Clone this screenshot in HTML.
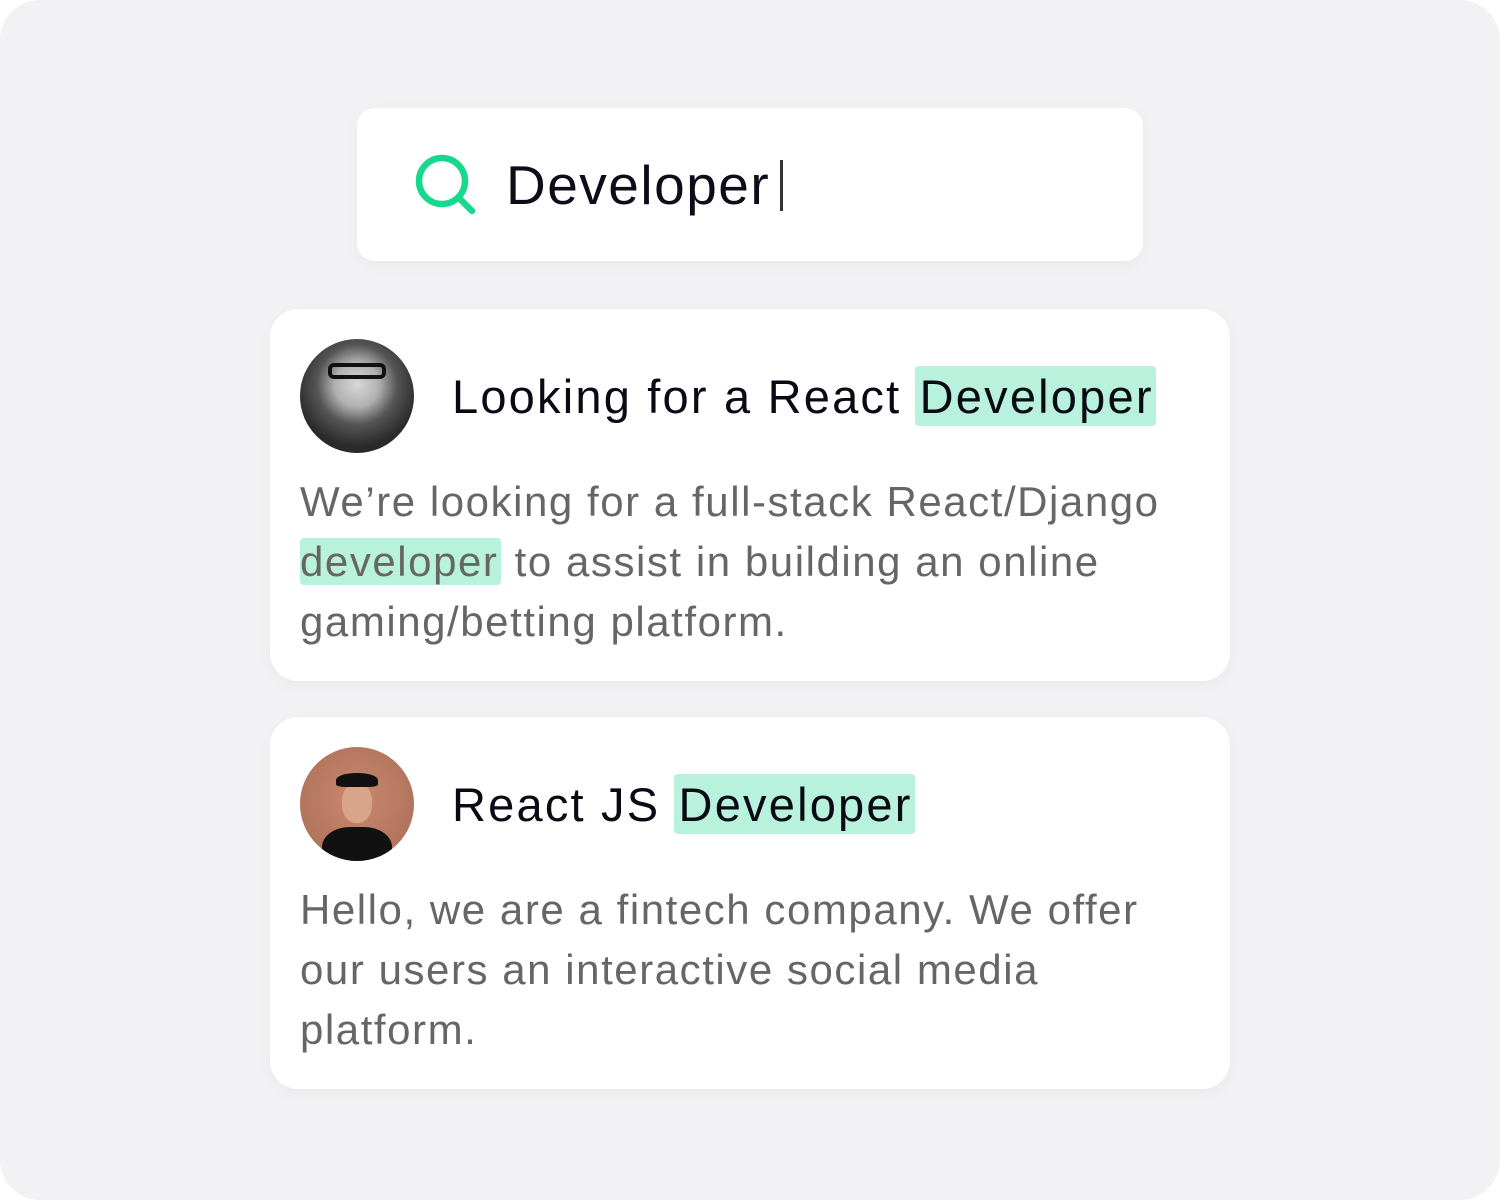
<!DOCTYPE html>
<html><head><meta charset="utf-8"><style>
html,body{margin:0;padding:0;background:#fff}
.bg{position:absolute;left:0;top:0;width:1500px;height:1200px;background:#f2f2f4;border-radius:40px;overflow:hidden;font-family:"Liberation Sans",sans-serif}
.box{position:absolute;background:#fff;box-shadow:0 4px 16px rgba(0,0,0,0.04)}
.t{position:absolute;white-space:nowrap}
.hl{background:#b8f2dc;border-radius:4px}
.title .hl{display:inline-block;height:60px;line-height:62px;padding:0 2px 0 5px;margin-left:-2px}
.body{color:#666;font-size:42px;line-height:60px;letter-spacing:1.55px}
.title{color:#0a0a14;font-size:47px;line-height:60px;letter-spacing:2.2px}
.av{position:absolute;width:114px;height:114px;border-radius:50%;overflow:hidden}
</style></head><body><div class="bg">
<div class="box" style="left:357px;top:108px;width:786px;height:153px;border-radius:18px"></div>
<svg style="position:absolute;left:405px;top:145px" width="80" height="80" viewBox="405 145 80 80"><circle cx="442" cy="181" r="23" fill="none" stroke="#16d98e" stroke-width="6.5"/><line x1="459" y1="198" x2="472" y2="211" stroke="#16d98e" stroke-width="6.5" stroke-linecap="round"/></svg>
<div class="t" style="left:506px;top:150px;font-size:55px;line-height:70px;color:#0d0d1a;letter-spacing:1.5px">Developer</div>
<div style="position:absolute;left:780px;top:160px;width:3px;height:51px;background:#333"></div>

<div class="box" style="left:270px;top:309px;width:960px;height:372px;border-radius:28px"></div>
<div class="av" style="left:300px;top:339px;background:radial-gradient(circle at 50% 40%,#d8d8d8 0,#b0b0b0 25%,#555 45%,#2a2a2a 70%)">
<div style="position:absolute;left:28px;top:24px;width:58px;height:16px;border:4px solid #111;border-radius:6px;box-sizing:border-box"></div></div>
<div class="t title" style="left:452px;top:366px">Looking for a React <span class="hl">Developer</span></div>
<div class="t body" style="left:300px;top:472px">We’re looking for a full-stack React/Django</div>
<div class="t body" style="left:300px;top:532px"><span class="hl" style="padding:0 3px 0 0;margin:0">developer</span> to assist in building an online</div>
<div class="t body" style="left:300px;top:592px">gaming/betting platform.</div>

<div class="box" style="left:270px;top:717px;width:960px;height:372px;border-radius:28px"></div>
<div class="av" style="left:300px;top:747px;background:radial-gradient(circle at 50% 45%,#c9896f 0,#b97a62 50%,#a56a52 100%)">
<div style="position:absolute;left:22px;top:80px;width:70px;height:50px;background:#111;border-radius:40% 40% 0 0"></div>
<div style="position:absolute;left:42px;top:36px;width:30px;height:40px;background:#d9a58a;border-radius:45%"></div>
<div style="position:absolute;left:36px;top:26px;width:42px;height:14px;background:#111;border-radius:50% 50% 20% 20%"></div></div>
<div class="t title" style="left:452px;top:774px">React JS <span class="hl">Developer</span></div>
<div class="t body" style="left:300px;top:880px">Hello, we are a fintech company. We offer</div>
<div class="t body" style="left:300px;top:940px">our users an interactive social media</div>
<div class="t body" style="left:300px;top:1000px">platform.</div>
</div></body></html>
